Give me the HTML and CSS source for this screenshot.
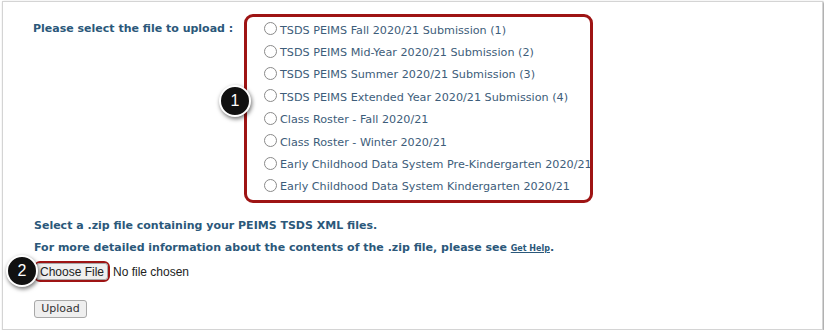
FILE: index.html
```html
<!DOCTYPE html>
<html>
<head>
<meta charset="utf-8">
<link rel="stylesheet" href="styles.css">
</head>
<body>
<div class="frame">
  <div class="select-row">
    <div class="select-label">Please select the file to upload :</div>
    <div class="options">
      <div class="opt"><span class="radio"></span>TSDS PEIMS Fall 2020/21 Submission (1)</div>
      <div class="opt"><span class="radio"></span>TSDS PEIMS Mid-Year 2020/21 Submission (2)</div>
      <div class="opt"><span class="radio"></span>TSDS PEIMS Summer 2020/21 Submission (3)</div>
      <div class="opt"><span class="radio"></span>TSDS PEIMS Extended Year 2020/21 Submission (4)</div>
      <div class="opt"><span class="radio"></span>Class Roster - Fall 2020/21</div>
      <div class="opt"><span class="radio"></span>Class Roster - Winter 2020/21</div>
      <div class="opt"><span class="radio"></span>Early Childhood Data System Pre-Kindergarten 2020/21</div>
      <div class="opt"><span class="radio"></span>Early Childhood Data System Kindergarten 2020/21</div>
    </div>
  </div>
  <div class="info">
    <p class="line">Select a .zip file containing your PEIMS TSDS XML files.</p>
    <p class="line">For more detailed information about the contents of the .zip file, please see <a class="help">Get Help</a>.</p>
  </div>
  <div class="file-row">
    <span class="highlight"><span class="btn choose">Choose File</span></span>
    <span class="nofile">No file chosen</span>
  </div>
  <div class="upload-row">
    <span class="btn upload">Upload</span>
  </div>
  <span class="badge badge-1">1</span>
  <span class="badge badge-2">2</span>
</div>
</body>
</html>
```
FILE: styles.css
```css
html, body {
  margin: 0;
  padding: 0;
  background: #ffffff;
}
.frame {
  position: relative;
  margin: 1px 0 0 2px;
  width: 819px;
  height: 327px;
  border: 1px solid #d4d4d4;
  box-shadow: 1px 1px 2px rgba(0, 0, 0, 0.45);
  background: #fff;
  font-family: "DejaVu Sans", Verdana, sans-serif;
  box-sizing: content-box;
}
.select-row {
  display: flex;
  padding: 12px 0 0 30px;
}
.select-label {
  width: 211px;
  flex: none;
  font-weight: bold;
  font-size: 11px;
  color: #2b587a;
  padding-top: 8px;
}
.options {
  height: 181px;
  border: 3px solid #9e1414;
  border-radius: 9px;
  overflow: hidden;
  padding: 2px 0 0 17px;
  box-sizing: content-box;
  width: 326px;
  display: flex;
  flex-direction: column;
}
.opt {
  height: 22.4px;
  display: flex;
  align-items: center;
  white-space: nowrap;
  font-size: 11.2px;
  color: #3d5d7a;
}
.radio {
  width: 11px;
  height: 11px;
  border: 1px solid #8a8a8a;
  border-radius: 50%;
  margin-right: 3px;
  margin-top: -3px;
  flex: none;
  background: #fff;
}
.info {
  padding: 12px 0 0 31px;
}
.line {
  margin: 0;
  height: 22px;
  line-height: 22px;
  font-size: 11px;
  font-weight: bold;
  color: #2b587a;
}
.help {
  font-size: 8px;
  text-decoration: underline;
  color: #2b587a;
}
.file-row {
  display: flex;
  align-items: center;
  padding: 2px 0 0 31px;
}
.highlight {
  display: inline-flex;
  border: 2px solid #9e1414;
  border-radius: 6px;
  padding: 0;
}
.btn {
  display: inline-flex;
  align-items: center;
  justify-content: center;
  background: #efefef;
  border: 1px solid #a8a8a8;
  border-radius: 3px;
  color: #222;
  box-sizing: border-box;
}
.choose {
  width: 72px;
  height: 17px;
  font-family: "Liberation Sans", Arial, sans-serif;
  font-size: 12px;
}
.nofile {
  margin-left: 3px;
  font-family: "Liberation Sans", Arial, sans-serif;
  font-size: 12px;
  color: #222;
}
.upload-row {
  padding: 15px 0 0 31px;
}
.upload {
  width: 53px;
  height: 18px;
  font-size: 11px;
  font-family: "DejaVu Sans", Verdana, sans-serif;
  color: #333;
}
.badge {
  position: absolute;
  width: 28px;
  height: 28px;
  border-radius: 50%;
  background: #111;
  border: 2px solid #fff;
  box-shadow: 1px 2px 4px rgba(0, 0, 0, 0.55);
  color: #fff;
  font-family: "Liberation Sans", Arial, sans-serif;
  font-size: 16px;
  display: flex;
  align-items: center;
  justify-content: center;
}
.badge-1 {
  left: 216px;
  top: 83px;
}
.badge-2 {
  left: 3px;
  top: 253px;
}
```
